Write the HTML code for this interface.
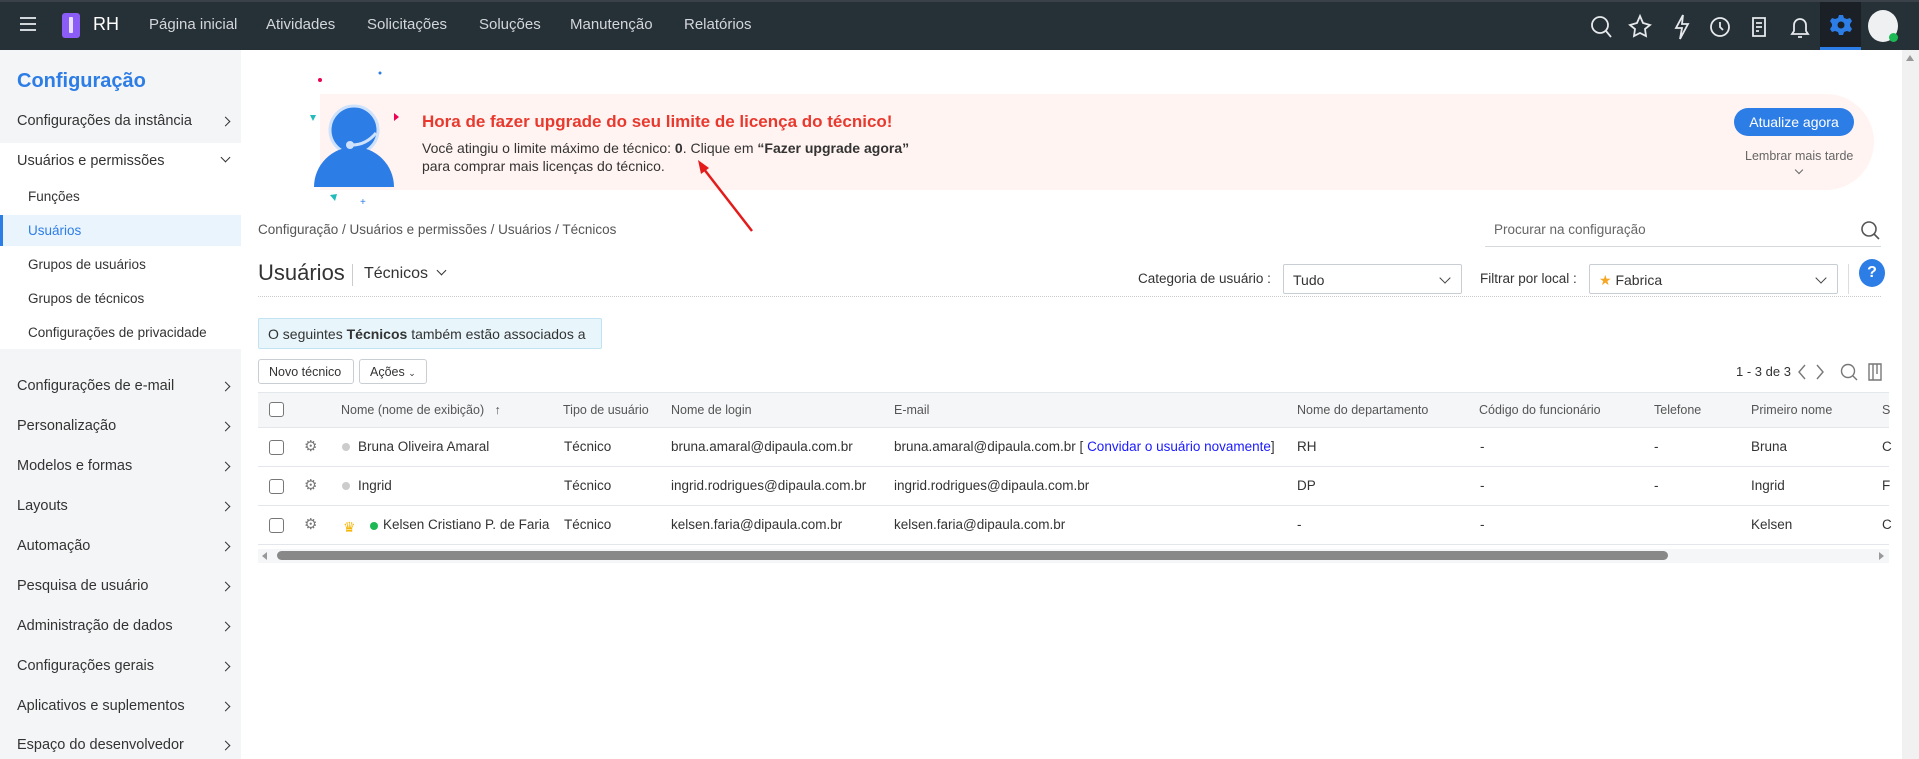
<!DOCTYPE html>
<html><head><meta charset="utf-8"><style>
*{margin:0;padding:0;box-sizing:border-box}
body{width:1919px;height:759px;overflow:hidden;font-family:"Liberation Sans",sans-serif;color:#333;background:#fff;position:relative}
.a{position:absolute;white-space:nowrap}
.top{position:absolute;left:0;top:0;width:1919px;height:50px;background:#263037;border-top:2px solid #3a4148}
.nav{color:#d3d7db;font-size:15px;top:16px}
.side{position:absolute;left:0;top:50px;width:241px;height:709px;background:#f4f5f7}
.si{font-size:14.5px;color:#333;left:17px}
.sub{font-size:13.5px;color:#333;left:28px}
.chev{position:absolute;right:12px;width:7px;height:7px;border-right:1.6px solid #333;border-top:1.6px solid #333;transform:rotate(45deg)}
.th{font-size:12.5px;color:#555;top:403px}
.td{font-size:13.5px;color:#333}
.cb{position:absolute;left:269px;width:15px;height:15px;border:1.3px solid #777;border-radius:3px;background:#fff}
.sel{position:absolute;height:30px;border:1px solid #c9ced4;border-radius:2px;background:#fff;font-size:14px;padding:7px 9px}
.dd{position:absolute;right:12px;top:9px;width:8px;height:8px;border-right:1.6px solid #444;border-bottom:1.6px solid #444;transform:rotate(45deg)}
.btn{position:absolute;top:359px;height:25px;border:1px solid #c9ced4;border-radius:3px;background:#fff;font-size:12.5px;padding:5px 10px}
.row{position:absolute;left:258px;width:1631px;height:39px;border-bottom:1px solid #e3e6ea}
</style></head><body>
<div class="top"></div>
<div class="a" style="left:20px;top:17px;width:16px;height:2px;background:#d3d7db;box-shadow:0 6px 0 #d3d7db,0 12px 0 #d3d7db"></div>
<div class="a" style="left:62px;top:13px;width:18px;height:25px;background:#8b5cf6;border-radius:3px"></div>
<div class="a" style="left:69px;top:17px;width:4px;height:16px;background:#e9e0ff;border-radius:1px"></div>
<div class="a nav" style="left:93px;top:14px;font-size:18px;color:#fff">RH</div>
<div class="a nav" style="left:149px">Página inicial</div>
<div class="a nav" style="left:266px">Atividades</div>
<div class="a nav" style="left:367px">Solicitações</div>
<div class="a nav" style="left:479px">Soluções</div>
<div class="a nav" style="left:570px">Manutenção</div>
<div class="a nav" style="left:684px">Relatórios</div>
<svg class="a" style="left:1588px;top:13px" width="290" height="28" fill="none" stroke="#e6e9ec" stroke-width="1.8">
<circle cx="12" cy="12" r="8"/><path d="M18 18l5 6"/>
<path d="M52 3l3 7 7 2-5 4 1 7-6-3-6 3 1-7-5-4 7-2z"/>
<path d="M95 2l-7 13h6l-2 11 8-15h-6z"/>
<circle cx="132" cy="14" r="9"/><path d="M132 9v5l3 3"/>
<path d="M165 5h12v18h-12z M168 10h6 M168 14h6 M168 18h3"/>
<path d="M212 6a6 6 0 0 0-6 6v6l-2 3h16l-2-3v-6a6 6 0 0 0-6-6z M210 24h4"/>
</svg>
<div class="a" style="left:1820px;top:2px;width:41px;height:48px;background:#1a2026;border-bottom:3px solid #2d7de6"></div>
<svg class="a" style="left:1830px;top:14px" width="22" height="22" viewBox="0 0 22 22"><path d="M9 1h4l1 3 3 1 3-1 2 3-2 3v2l2 3-2 3-3-1-3 1-1 3H9l-1-3-3-1-3 1-2-3 2-3v-2L0 7l2-3 3 1 3-1z" fill="#2d7de6"/><circle cx="11" cy="11" r="3.5" fill="#1a2026"/></svg>
<div class="a" style="left:1868px;top:10px;width:30px;height:32px;border-radius:50%;background:#eef0f2"></div>
<div class="a" style="left:1889px;top:33px;width:9px;height:9px;border-radius:50%;background:#1db954"></div>

<div class="side"></div>
<div class="a" style="left:0;top:143px;width:241px;height:206px;background:#fff"></div>
<div class="a" style="left:0;top:215px;width:241px;height:31px;background:#eaf4fd;border-left:3px solid #2d7de6"></div>
<div class="a" style="left:17px;top:70px;font-size:20px;font-weight:bold;color:#2d7de6">Configuração</div>
<div class="a si" style="top:113px">Configurações da instância</div><div class="chev" style="left:222px;top:118px"></div>
<div class="a si" style="top:153px">Usuários e permissões</div><div class="chev" style="left:222px;top:154px;transform:rotate(135deg)"></div>
<div class="a sub" style="top:189px">Funções</div>
<div class="a sub" style="top:223px;color:#2d7de6">Usuários</div>
<div class="a sub" style="top:257px">Grupos de usuários</div>
<div class="a sub" style="top:291px">Grupos de técnicos</div>
<div class="a sub" style="top:325px">Configurações de privacidade</div>
<div class="a si" style="top:378px">Configurações de e-mail</div><div class="chev" style="left:222px;top:383px"></div>
<div class="a si" style="top:418px">Personalização</div><div class="chev" style="left:222px;top:423px"></div>
<div class="a si" style="top:458px">Modelos e formas</div><div class="chev" style="left:222px;top:463px"></div>
<div class="a si" style="top:498px">Layouts</div><div class="chev" style="left:222px;top:503px"></div>
<div class="a si" style="top:538px">Automação</div><div class="chev" style="left:222px;top:543px"></div>
<div class="a si" style="top:578px">Pesquisa de usuário</div><div class="chev" style="left:222px;top:583px"></div>
<div class="a si" style="top:618px">Administração de dados</div><div class="chev" style="left:222px;top:623px"></div>
<div class="a si" style="top:658px">Configurações gerais</div><div class="chev" style="left:222px;top:663px"></div>
<div class="a si" style="top:698px">Aplicativos e suplementos</div><div class="chev" style="left:222px;top:703px"></div>
<div class="a si" style="top:737px">Espaço do desenvolvedor</div><div class="chev" style="left:222px;top:742px"></div>

<!-- banner -->
<div class="a" style="left:320px;top:94px;width:1554px;height:96px;background:#fff4f2;border-radius:0 48px 48px 0"></div>
<svg class="a" style="left:290px;top:65px" width="120" height="140">
<circle cx="64" cy="65" r="24" fill="#2d7de6" stroke="#cfe2fb" stroke-width="3"/>
<path d="M24 122a40 40 0 0 1 80 0z" fill="#2d7de6"/>
<path d="M62 80q14 0 24-12" stroke="#cfe2fb" stroke-width="3" fill="none"/><circle cx="60" cy="80" r="4" fill="#cfe2fb"/>
<circle cx="30" cy="15" r="2" fill="#e05"/><circle cx="90" cy="8" r="1.5" fill="#2d7de6"/><path d="M20 50l3 6 3-6z" fill="#2bb"/><path d="M40 130l5 6 2-7z" fill="#2bb"/><text x="70" y="140" font-size="10" fill="#2d7de6">+</text><path d="M104 48l5 4-5 4z" fill="#e05"/>
</svg>
<div class="a" style="left:422px;top:112px;font-size:17px;font-weight:bold;color:#e8392e">Hora de fazer upgrade do seu limite de licença do técnico!</div>
<div class="a" style="left:422px;top:140px;font-size:14px;color:#333">Você atingiu o limite máximo de técnico: <b>0</b>. Clique em <b>“Fazer upgrade agora”</b></div>
<div class="a" style="left:422px;top:158px;font-size:14px;color:#333">para comprar mais licenças do técnico.</div>
<svg class="a" style="left:690px;top:158px" width="70" height="80"><path d="M62 73L10 6" stroke="#e31b1b" stroke-width="2.5"/><path d="M8 2l3 14 8-6z" fill="#e31b1b"/></svg>
<div class="a" style="left:1734px;top:108px;width:120px;height:28px;border-radius:14px;background:#2d7de6;color:#fff;font-size:14px;text-align:center;line-height:28px">Atualize agora</div>
<div class="a" style="left:1745px;top:149px;font-size:12.5px;color:#666">Lembrar mais tarde</div>
<div class="a" style="left:1796px;top:167px;width:6px;height:6px;border-right:1.3px solid #666;border-bottom:1.3px solid #666;transform:rotate(45deg)"></div>

<div class="a" style="left:258px;top:222px;font-size:13.5px;color:#555">Configuração / Usuários e permissões / Usuários / Técnicos</div>
<div class="a" style="left:1494px;top:222px;font-size:13.5px;color:#666">Procurar na configuração</div>
<div class="a" style="left:1485px;top:246px;width:396px;height:1px;background:#d5d9de"></div>
<svg class="a" style="left:1860px;top:220px" width="22" height="22" fill="none" stroke="#555" stroke-width="1.6"><circle cx="9" cy="9" r="7"/><path d="M14 14l5 5"/></svg>

<div class="a" style="left:258px;top:260px;font-size:22px;color:#333">Usuários</div>
<div class="a" style="left:352px;top:264px;width:1px;height:22px;background:#ccc"></div>
<div class="a" style="left:364px;top:265px;font-size:16px;color:#333">Técnicos</div>
<div class="a" style="left:438px;top:267px;width:7px;height:7px;border-right:1.5px solid #333;border-bottom:1.5px solid #333;transform:rotate(45deg)"></div>
<div class="a" style="left:1138px;top:271px;font-size:13.5px">Categoria de usuário :</div>
<div class="sel" style="left:1283px;top:264px;width:179px">Tudo<div class="dd"></div></div>
<div class="a" style="left:1480px;top:271px;font-size:13.5px">Filtrar por local :</div>
<div class="sel" style="left:1589px;top:264px;width:249px"><span style="color:#f5a623">★</span> Fabrica<div class="dd"></div></div>
<div class="a" style="left:1848px;top:264px;width:1px;height:30px;background:#ddd"></div>
<div class="a" style="left:1859px;top:259px;width:26px;height:28px;border-radius:50%;background:#2d7de6;color:#fff;font-weight:bold;font-size:16px;text-align:center;line-height:28px">?</div>
<div class="a" style="left:258px;top:296px;width:1623px;border-top:1px dotted #ccc"></div>

<div class="a" style="left:258px;top:318px;width:344px;height:31px;background:#e8f6fc;border:1px solid #c2e3f2;border-radius:2px;font-size:14px;padding:7px 9px">O seguintes <b>Técnicos</b> também estão associados a</div>
<div class="btn" style="left:258px;width:96px">Novo técnico</div>
<div class="btn" style="left:359px;width:68px">Ações <span style="font-size:9px">⌄</span></div>
<div class="a" style="left:1736px;top:364px;font-size:13px">1 - 3 de 3</div>
<svg class="a" style="left:1795px;top:361px" width="95" height="22" fill="none" stroke="#777" stroke-width="1.4"><path d="M10 4l-6 7 6 7M22 4l6 7-6 7"/><circle cx="53" cy="10" r="6.5"/><path d="M58 15l4 4"/><path d="M74 3h12v16h-12zM78 3v16M82 3v10"/></svg>

<div class="a" style="left:258px;top:392px;width:1631px;height:36px;background:#f5f6f8;border-top:1px solid #e3e6ea;border-bottom:1px solid #e3e6ea"></div>
<div class="cb" style="top:402px"></div>
<div class="a th" style="left:341px">Nome (nome de exibição) &nbsp;&nbsp;↑</div>
<div class="a th" style="left:563px">Tipo de usuário</div>
<div class="a th" style="left:671px">Nome de login</div>
<div class="a th" style="left:894px">E-mail</div>
<div class="a th" style="left:1297px">Nome do departamento</div>
<div class="a th" style="left:1479px">Código do funcionário</div>
<div class="a th" style="left:1654px">Telefone</div>
<div class="a th" style="left:1751px">Primeiro nome</div>
<div class="a th" style="left:1882px">S</div>

<div class="row" style="top:428px"></div><div class="row" style="top:467px"></div><div class="row" style="top:506px"></div>
<div class="cb" style="top:440px"></div><div class="cb" style="top:479px"></div><div class="cb" style="top:518px"></div>
<div class="a td" style="left:304px;top:437px;color:#777;font-size:15px">⚙</div>
<div class="a td" style="left:304px;top:476px;color:#777;font-size:15px">⚙</div>
<div class="a td" style="left:304px;top:515px;color:#777;font-size:15px">⚙</div>
<div class="a" style="left:342px;top:443px;width:8px;height:8px;border-radius:50%;background:#ccc"></div>
<div class="a" style="left:342px;top:482px;width:8px;height:8px;border-radius:50%;background:#ccc"></div>
<div class="a" style="left:343px;top:519px;color:#f5b400;font-size:14px">♛</div>
<div class="a" style="left:370px;top:522px;width:8px;height:8px;border-radius:50%;background:#1db954"></div>
<div class="a td" style="left:358px;top:439px">Bruna Oliveira Amaral</div>
<div class="a td" style="left:358px;top:478px">Ingrid</div>
<div class="a td" style="left:383px;top:517px">Kelsen Cristiano P. de Faria</div>
<div class="a td" style="left:564px;top:439px">Técnico</div><div class="a td" style="left:564px;top:478px">Técnico</div><div class="a td" style="left:564px;top:517px">Técnico</div>
<div class="a td" style="left:671px;top:439px">bruna.amaral@dipaula.com.br</div>
<div class="a td" style="left:671px;top:478px">ingrid.rodrigues@dipaula.com.br</div>
<div class="a td" style="left:671px;top:517px">kelsen.faria@dipaula.com.br</div>
<div class="a td" style="left:894px;top:439px">bruna.amaral@dipaula.com.br [ <span style="color:#1a1aff">Convidar o usuário novamente</span>]</div>
<div class="a td" style="left:894px;top:478px">ingrid.rodrigues@dipaula.com.br</div>
<div class="a td" style="left:894px;top:517px">kelsen.faria@dipaula.com.br</div>
<div class="a td" style="left:1297px;top:439px">RH</div><div class="a td" style="left:1297px;top:478px">DP</div><div class="a td" style="left:1297px;top:517px">-</div>
<div class="a td" style="left:1480px;top:439px">-</div><div class="a td" style="left:1480px;top:478px">-</div><div class="a td" style="left:1480px;top:517px">-</div>
<div class="a td" style="left:1654px;top:439px">-</div><div class="a td" style="left:1654px;top:478px">-</div>
<div class="a td" style="left:1751px;top:439px">Bruna</div><div class="a td" style="left:1751px;top:478px">Ingrid</div><div class="a td" style="left:1751px;top:517px">Kelsen</div>
<div class="a td" style="left:1882px;top:439px">C</div><div class="a td" style="left:1882px;top:478px">F</div><div class="a td" style="left:1882px;top:517px">C</div>
<div class="a" style="left:258px;top:549px;width:1631px;height:14px;background:#f5f6f8"></div>
<div class="a" style="left:262px;top:552px;border-right:5px solid #999;border-top:4px solid transparent;border-bottom:4px solid transparent"></div>
<div class="a" style="left:277px;top:551px;width:1391px;height:9px;border-radius:5px;background:#888"></div>
<div class="a" style="left:1879px;top:552px;border-left:5px solid #999;border-top:4px solid transparent;border-bottom:4px solid transparent"></div>
<div class="a" style="left:1902px;top:50px;width:17px;height:709px;background:#f1f1f1"></div>
<div class="a" style="left:1906px;top:55px;border-bottom:6px solid #999;border-left:4px solid transparent;border-right:4px solid transparent"></div>
</body></html>
